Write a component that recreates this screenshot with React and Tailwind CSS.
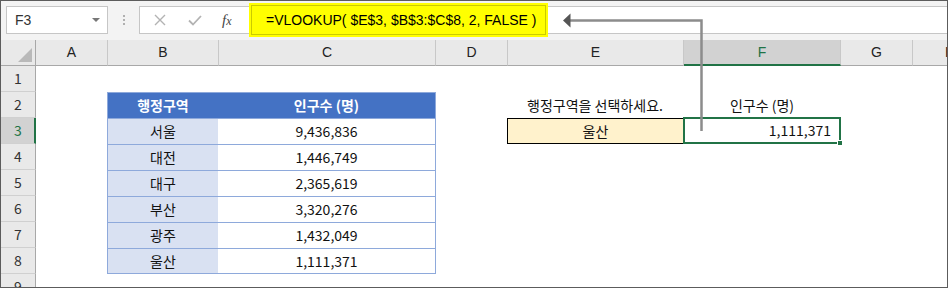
import { Fragment } from 'react'

const headerCols = [
  { key: 'A', width: 'w-[72px]' },
  { key: 'B', width: 'w-[111px]' },
  { key: 'C', width: 'w-[217px]' },
  { key: 'D', width: 'w-[72px]' },
  { key: 'E', width: 'w-[176px]' },
  { key: 'F', width: 'w-[157px]', active: true },
  { key: 'G', width: 'w-[72px]' },
]

const cities = [
  ['서울', '9,436,836'],
  ['대전', '1,446,749'],
  ['대구', '2,365,619'],
  ['부산', '3,320,276'],
  ['광주', '1,432,049'],
  ['울산', '1,111,371'],
]

function RowHead({ n, active }) {
  return (
    <div
      className={`flex w-[35px] shrink-0 items-center justify-center border-b border-[#d0d0d0] ${
        active
          ? 'border-r-2 border-r-[#217346] bg-[#d2d2d2] pl-[1px] text-[#217346]'
          : 'border-r border-r-[#a8a8a8] bg-[#e9e9e9] text-[#333]'
      }`}
    >
      {n}
    </div>
  )
}

function Toolbar() {
  return (
    <div className="flex h-[39px] shrink-0 items-start bg-[#f3f3f3] pt-[5px]">
      <div className="ml-[5px] flex h-[28px] w-[102px] items-center justify-between border border-[#c6c6c6] bg-white pl-[8px] pr-[7px] font-['Liberation_Sans',sans-serif] text-[14px] text-[#333]">
        <span>F3</span>
        <span className="h-0 w-0 border-x-[4px] border-t-[4px] border-x-transparent border-t-[#777]" />
      </div>
      <div className="flex h-[28px] w-[31px] flex-col items-center justify-center gap-[2px]">
        <span className="h-[2px] w-[2px] bg-[#b0b0b0]" />
        <span className="h-[2px] w-[2px] bg-[#b0b0b0]" />
        <span className="h-[2px] w-[2px] bg-[#b0b0b0]" />
      </div>
      <div className="flex h-[28px] flex-1 items-center border border-r-0 border-[#c6c6c6] bg-white">
        <div className="flex w-[109px] shrink-0 items-center">
          <svg className="ml-[14px]" width="12" height="12" viewBox="0 0 12 12">
            <path d="M1 1L11 11M11 1L1 11" stroke="#b3b3b3" strokeWidth="1.4" fill="none" />
          </svg>
          <svg className="ml-[22px]" width="14" height="12" viewBox="0 0 14 12">
            <path d="M1 6.5L5 10.5L13 2" stroke="#b3b3b3" strokeWidth="1.8" fill="none" />
          </svg>
          <span className="ml-[20px] font-['Liberation_Serif',serif] text-[15px] italic text-[#444]">
            f<span className="text-[12px]">x</span>
          </span>
        </div>
        <div className="flex h-[34px] w-[299px] shrink-0 bg-[#ffff00] p-[2px]">
          <div className="flex flex-1 items-center border border-[#cbcb00] pl-[14px] font-['Liberation_Sans',sans-serif] text-[14px] text-black">
            =VLOOKUP( $E$3, $B$3:$C$8, 2, FALSE )
          </div>
        </div>
      </div>
    </div>
  )
}

function ColumnHeader() {
  return (
    <div className="flex h-[26px] shrink-0 bg-[#e9e9e9] font-['Liberation_Sans',sans-serif] text-[14px]">
      <div className="relative w-[35px] shrink-0 border-b border-r border-[#a8a8a8]">
        <span className="absolute bottom-[3px] right-[3px] h-0 w-0 border-b-[14px] border-l-[14px] border-b-[#b9b9b9] border-l-transparent" />
      </div>
      {headerCols.map((c) => (
        <div
          key={c.key}
          className={`flex shrink-0 items-center justify-center border-r border-r-[#c8c8c8] ${c.width} ${
            c.active
              ? 'border-b-2 border-b-[#217346] bg-[#d2d2d2] text-[#217346]'
              : 'border-b border-b-[#a8a8a8] text-[#222]'
          }`}
        >
          {c.key}
        </div>
      ))}
      <div className="flex flex-1 items-center border-b border-[#a8a8a8] pl-[32px] text-[#222]">H</div>
    </div>
  )
}

export default function App() {
  return (
    <div className="relative flex h-[288px] w-[948px] flex-col overflow-hidden border border-[#5c5c5c] bg-white">
      <Toolbar />
      <ColumnHeader />

      <div className="flex flex-col font-['Noto_Sans_CJK_KR',sans-serif] text-[14px] text-[#111]">
        {/* row 1 */}
        <div className="flex h-[26px]">
          <RowHead n={1} />
        </div>

        {/* row 2 */}
        <div className="flex h-[26px]">
          <RowHead n={2} />
          <div className="w-[71px] shrink-0" />
          <div className="flex w-[111px] shrink-0 items-center justify-center border-l border-t border-[#8ea9db] bg-[#4472c4] font-bold text-white">
            행정구역
          </div>
          <div className="flex w-[218px] shrink-0 items-center justify-center border-r border-t border-[#8ea9db] bg-[#4472c4] font-bold text-white">
            인구수 (명)
          </div>
          <div className="w-[71px] shrink-0" />
          <div className="flex w-[176px] shrink-0 items-center justify-center">행정구역을 선택하세요.</div>
          <div className="flex w-[158px] shrink-0 items-center justify-center">인구수 (명)</div>
        </div>

        {cities.map(([name, pop], i) => {
          const row = i + 3
          const last = i === cities.length - 1
          return (
            <div key={name} className="flex h-[26px]">
              <RowHead n={row} active={row === 3} />
              <div className="w-[71px] shrink-0" />
              <div
                className={`flex w-[111px] shrink-0 items-center justify-center border-l border-t border-[#8ea9db] bg-[#d9e1f2] ${
                  last ? 'border-b' : ''
                }`}
              >
                {name}
              </div>
              <div
                className={`flex w-[218px] shrink-0 items-center justify-center border-r border-t border-[#8ea9db] ${
                  last ? 'border-b' : ''
                }`}
              >
                {pop}
              </div>
              {row === 3 && (
                <Fragment>
                  <div className="w-[71px] shrink-0" />
                  <div className="flex w-[176px] shrink-0 items-center justify-center border border-r-0 border-black bg-[#fff2cc]">
                    울산
                  </div>
                  <div className="relative -mt-[1px] flex h-[27px] w-[158px] shrink-0 items-center justify-end border-2 border-[#217346] pr-[8px]">
                    1,111,371
                    <span className="absolute -bottom-[4px] -right-[4px] h-[6px] w-[6px] border border-white bg-[#217346]" />
                  </div>
                </Fragment>
              )}
            </div>
          )
        })}

        {/* row 9 */}
        <div className="flex h-[26px]">
          <RowHead n={9} />
        </div>
      </div>

      <svg className="pointer-events-none absolute left-[-1px] top-[-1px]" width="948" height="288" viewBox="0 0 948 288">
        <path d="M701.5 131V20.5H569" stroke="#8c8c8c" strokeWidth="2.5" fill="none" />
        <path d="M563 20.5L570.5 13.5V27.5Z" fill="#555" />
      </svg>
    </div>
  )
}
